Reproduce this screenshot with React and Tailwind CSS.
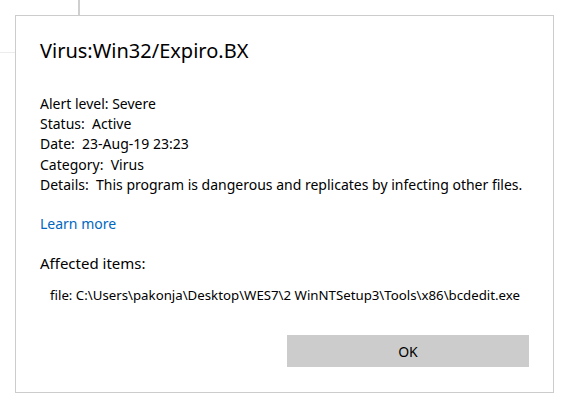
export default function App() {
  const font = { fontFamily: '"Noto Sans", "Open Sans", sans-serif' }
  return (
    <div className="relative h-[407px] w-[573px] bg-white text-black" style={font}>
      <div className="absolute left-[78px] top-0 h-[15px] w-[2px] bg-[#cfcfcf]" />
      <div className="absolute left-0 top-[52px] h-px w-[15px] bg-[#ececec]" />
      <div className="absolute left-[15px] top-[15px] flex h-[378px] w-[539px] flex-col border border-[#cccccc] bg-white pl-[24px] pr-[24px]">
        <h1 className="mt-[21px] text-[20px] leading-[28px]">Virus:Win32/Expiro.BX</h1>
        <div className="mt-[29px] text-[14px] leading-[20.2px]">
          <p>Alert level: Severe</p>
          <p>Status:&nbsp; Active</p>
          <p>Date:&nbsp; 23-Aug-19 23:23</p>
          <p>Category:&nbsp; Virus</p>
          <p>Details:&nbsp; This program is dangerous and replicates by infecting other files.</p>
        </div>
        <a className="mt-[19px] text-[14px] leading-[20px] text-[#0067c0]">Learn more</a>
        <p className="mt-[19px] text-[15px] leading-[20px]">Affected items:</p>
        <p className="mt-[12px] pl-[10px] text-[13.25px] leading-[20px]">
          file: C:\Users\pakonja\Desktop\WES7\2 WinNTSetup3\Tools\x86\bcdedit.exe
        </p>
        <div className="mt-[30px] flex justify-end">
          <button className="h-[32px] w-[242px] bg-[#cccccc] text-[14px]">OK</button>
        </div>
      </div>
    </div>
  )
}
